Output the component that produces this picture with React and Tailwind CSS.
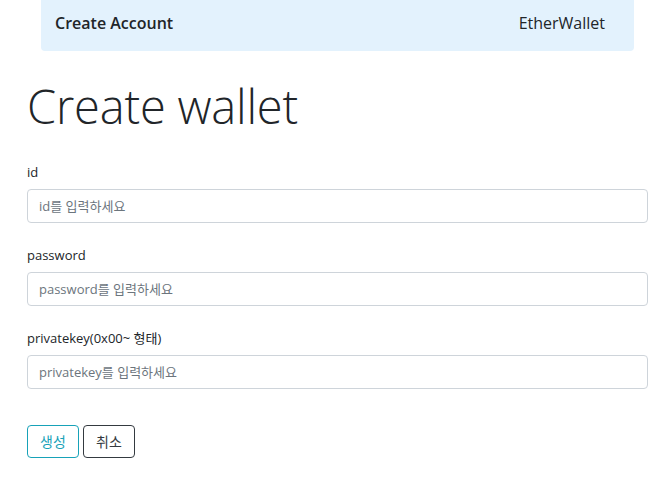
import React from 'react'

const font = { fontFamily: '"Open Sans", "Noto Sans CJK KR", sans-serif' }

function Field({ label, placeholder, type = 'text' }) {
  return (
    <div className="mb-[22px]">
      <label className="block text-[13px] text-[#212529] mb-[7px] leading-[20px]">{label}</label>
      <input
        type={type}
        placeholder={placeholder}
        className="block w-full h-[34px] px-[11px] text-[13px] border border-[#ced4da] rounded-[4px] bg-white placeholder:text-[#6c757d] outline-none"
      />
    </div>
  )
}

export default function App() {
  return (
    <div className="min-h-[483px] bg-white text-[#212529]" style={font}>
      {/* Nav */}
      <div className="mx-[41px] w-[593px] h-[51px] bg-[#e3f2fd] rounded-b-[4px] flex items-center justify-between pl-[14px] pr-[29px] pb-[5px]">
        <span className="text-[16px] font-semibold">Create Account</span>
        <span className="text-[16px]">EtherWallet</span>
      </div>

      <div className="pl-[27px] pr-[17px]">
        <h1 className="text-[47px] font-light leading-[56px] mt-[27px] mb-[28px] tracking-[-0.2px]">Create wallet</h1>

        <Field label="id" placeholder="id를 입력하세요" />
        <Field label="password" placeholder="password를 입력하세요" type="password" />
        <Field label="privatekey(0x00~ 형태)" placeholder="privatekey를 입력하세요" />

        <div className="flex gap-[4px] mt-[36px]">
          <button className="h-[33px] w-[52px] text-[14px] text-[#17a2b8] border border-[#17a2b8] rounded-[4px]">생성</button>
          <button className="h-[33px] w-[52px] text-[14px] text-[#343a40] border border-[#343a40] rounded-[4px]">취소</button>
        </div>
      </div>
    </div>
  )
}
